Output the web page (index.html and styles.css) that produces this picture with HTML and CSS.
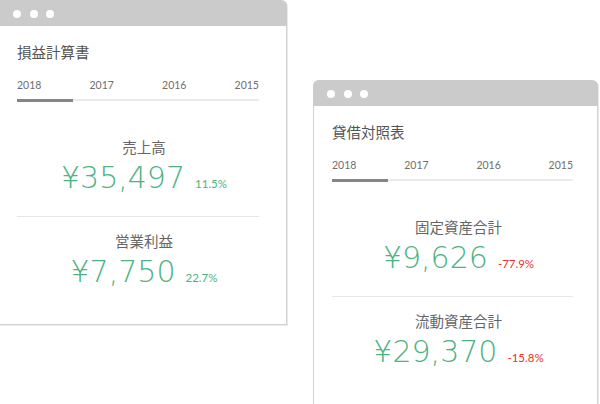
FILE: index.html
```html
<!DOCTYPE html>
<html lang="ja">
<head>
<meta charset="utf-8">
<link rel="stylesheet" href="styles.css">
</head>
<body>
<div class="desk">
  <section class="window window-pl">
    <div class="titlebar"><span class="dot"></span><span class="dot"></span><span class="dot"></span></div>
    <div class="body">
      <h2 class="title">損益計算書</h2>
      <div class="tabs"><span>2018</span><span>2017</span><span>2016</span><span>2015</span></div>
      <div class="track"><div class="active"></div></div>
      <div class="metric first">
        <div class="label">売上高</div>
        <div class="value">¥35,497<span class="pct up">11.5%</span></div>
      </div>
      <div class="sep"></div>
      <div class="metric">
        <div class="label">営業利益</div>
        <div class="value">¥7,750<span class="pct up">22.7%</span></div>
      </div>
    </div>
  </section>
  <section class="window window-bs">
    <div class="titlebar"><span class="dot"></span><span class="dot"></span><span class="dot"></span></div>
    <div class="body">
      <h2 class="title">貸借対照表</h2>
      <div class="tabs"><span>2018</span><span>2017</span><span>2016</span><span>2015</span></div>
      <div class="track"><div class="active"></div></div>
      <div class="metric first">
        <div class="label">固定資産合計</div>
        <div class="value">¥9,626<span class="pct down">-77.9%</span></div>
      </div>
      <div class="sep"></div>
      <div class="metric">
        <div class="label">流動資産合計</div>
        <div class="value">¥29,370<span class="pct down">-15.8%</span></div>
      </div>
    </div>
  </section>
</div>
</body>
</html>
```

FILE: styles.css
```css
html, body {
  margin: 0;
  padding: 0;
  background: #ffffff;
}
body {
  font-family: "Noto Sans CJK JP", "Noto Sans", sans-serif;
}
.desk {
  position: relative;
  width: 600px;
  height: 404px;
  overflow: hidden;
}
.window {
  position: absolute;
  box-sizing: border-box;
  background: #ffffff;
  border: 1px solid #d2d2d2;
  border-top: none;
  border-radius: 6px 6px 0 0;
  box-shadow: 1px 1px 0 #e9e9e9;
}
.window-pl {
  left: -1px;
  top: 0;
  width: 288px;
  height: 325px;
  border-radius: 0 6px 0 0;
}
.window-bs {
  left: 313px;
  top: 80px;
  width: 285px;
  height: 340px;
}
.titlebar {
  height: 26px;
  margin: 0 -1px;
  background: #cbcbcb;
  display: flex;
  align-items: flex-start;
  gap: 8.5px;
  padding: 10px 0 0 14px;
  box-sizing: border-box;
}
.window-pl .titlebar { border-radius: 0 6px 0 0; }
.window-bs .titlebar { border-radius: 6px 6px 0 0; }
.dot {
  width: 8px;
  height: 8px;
  border-radius: 50%;
  background: #ffffff;
}
.body {
  padding: 16px 27px 0 17px;
}
.window-bs .body {
  padding: 16px 24px 0 18px;
}
.title {
  margin: 0;
  font-size: 14.5px;
  line-height: 20px;
  font-weight: 400;
  color: #555555;
}
.tabs {
  margin-top: 16px;
  display: flex;
  justify-content: space-between;
  font-family: "Lato", sans-serif;
  font-size: 10.5px;
  line-height: 14px;
  color: #6e6e6e;
  font-weight: 400;
}
.track {
  margin-top: 7px;
  height: 2px;
  background: #ebebeb;
  display: flex;
  align-items: flex-start;
}
.active {
  width: 56px;
  height: 3px;
  margin-top: -0.5px;
  background: #858585;
}
.metric {
  padding-left: 12px;
  text-align: center;
}
.metric.first {
  margin-top: 36px;
}
.label {
  font-size: 14.5px;
  line-height: 20px;
  color: #666666;
}
.value {
  margin-top: 3px;
  font-family: "DejaVu Sans ExtraLight", "DejaVu Sans", sans-serif;
  font-weight: 200;
  font-size: 30px;
  line-height: 36px;
  color: #4db381;
  white-space: nowrap;
}
.pct {
  margin-left: 10px;
  font-family: "Lato", sans-serif;
  font-weight: 400;
  font-size: 11.5px;
  line-height: 14px;
}
.pct.up { color: #4db381; }
.pct.down { color: #e5332f; }
.sep {
  margin-top: 20px;
  height: 1px;
  background: #e6e6e6;
  margin-bottom: 14px;
}
```
